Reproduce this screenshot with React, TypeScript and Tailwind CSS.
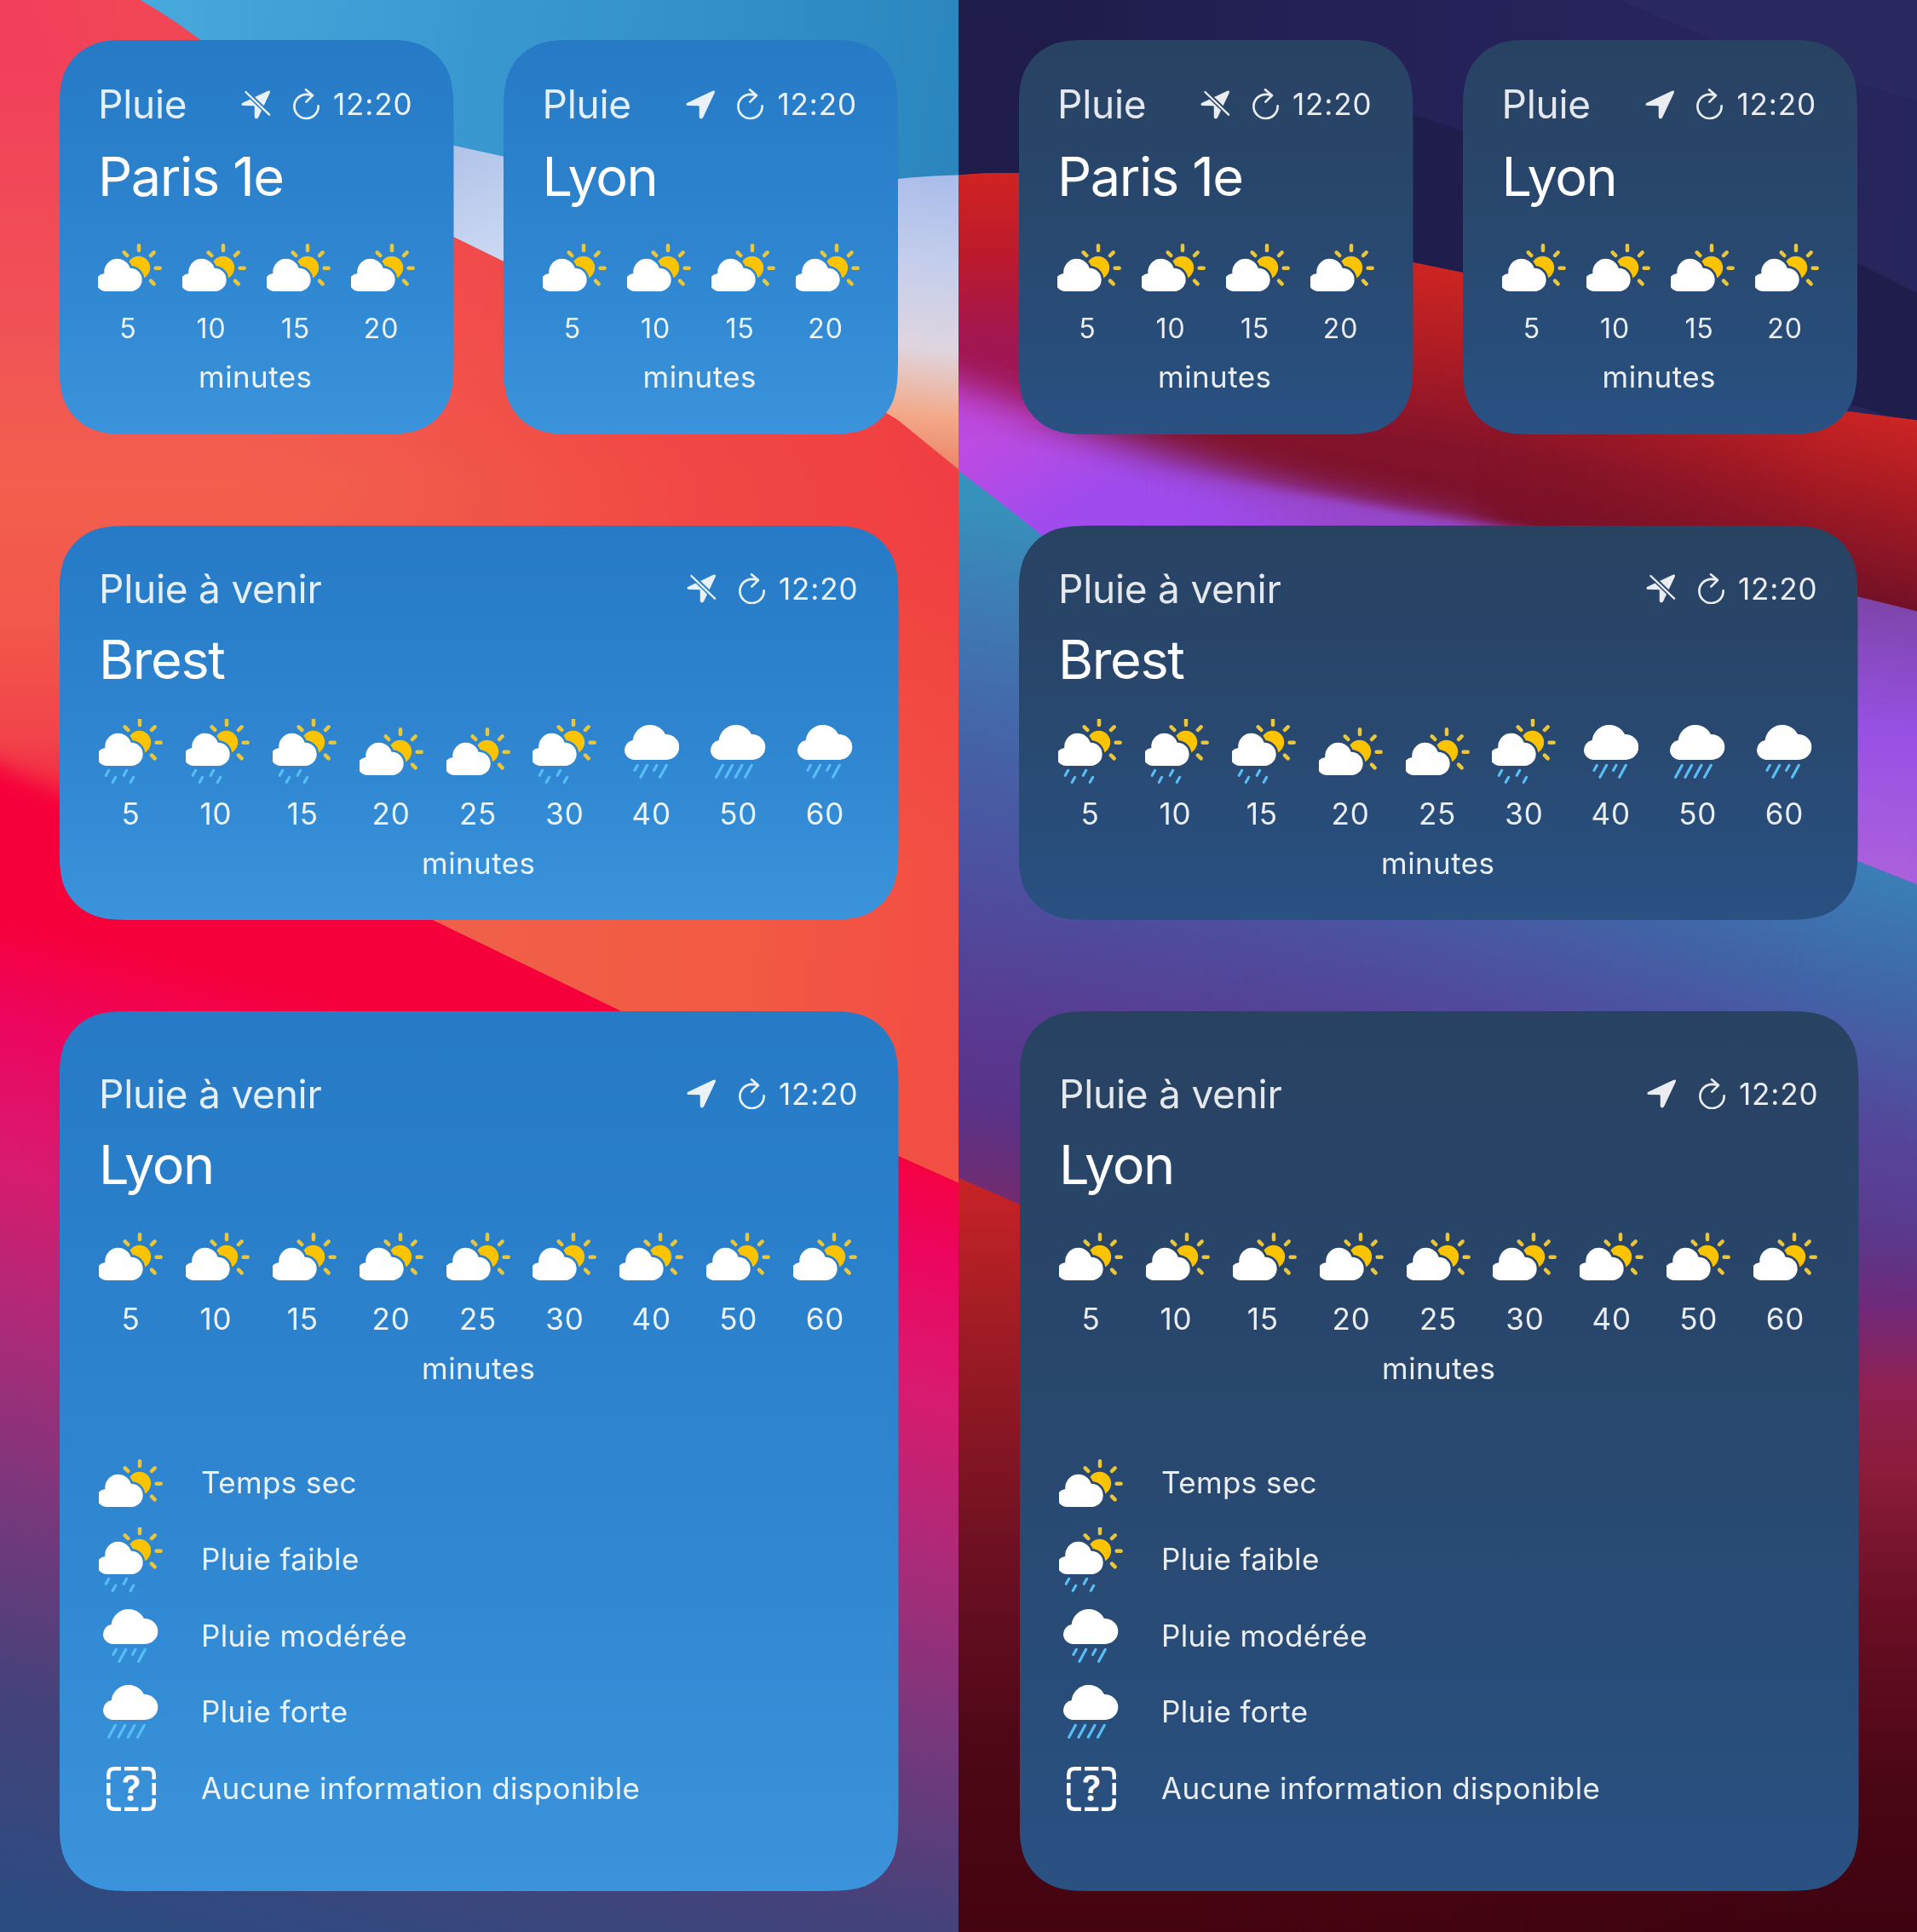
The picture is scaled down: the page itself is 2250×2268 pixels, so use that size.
import React, { useId } from "react";

type Theme = "light" | "dark";
type Weather = "dry" | "light" | "moderate" | "heavy" | "unknown";

/* ---------- Wallpapers ---------- */

function LightWallpaper() {
  return (
    <svg className="absolute inset-0 h-full w-full" viewBox="0 0 778 1568" preserveAspectRatio="none" aria-hidden="true">
      <defs>
        <linearGradient id="lw-base" gradientUnits="userSpaceOnUse" x1="0" y1="0" x2="-368.9" y2="1475.8">
          <stop offset="0.38" stopColor="#f6003a" />
          <stop offset="0.475" stopColor="#f6003c" />
          <stop offset="0.53" stopColor="#ec0660" />
          <stop offset="0.6" stopColor="#d91a6f" />
          <stop offset="0.69" stopColor="#a92b78" />
          <stop offset="0.79" stopColor="#71397c" />
          <stop offset="0.875" stopColor="#45427a" />
          <stop offset="0.98" stopColor="#2c4b80" />
        </linearGradient>
        <linearGradient id="lw-coral" gradientUnits="userSpaceOnUse" x1="0" y1="60" x2="0" y2="660">
          <stop offset="0" stopColor="#f2405a" />
          <stop offset="0.32" stopColor="#f15156" />
          <stop offset="0.55" stopColor="#f25f4d" />
          <stop offset="0.75" stopColor="#f2574b" />
          <stop offset="0.9" stopColor="#f2434a" />
          <stop offset="1" stopColor="#f41c40" />
        </linearGradient>
        <linearGradient id="lw-red" gradientUnits="userSpaceOnUse" x1="730" y1="300" x2="200" y2="490">
          <stop offset="0" stopColor="#f03f42" />
          <stop offset="0.35" stopColor="#f14344" stopOpacity="0.85" />
          <stop offset="0.7" stopColor="#f15046" stopOpacity="0.45" />
          <stop offset="1" stopColor="#f0604a" stopOpacity="0" />
        </linearGradient>
        <linearGradient id="lw-orange" gradientUnits="userSpaceOnUse" x1="350" y1="760" x2="778" y2="800">
          <stop offset="0" stopColor="#ef604a" />
          <stop offset="0.55" stopColor="#f35a43" />
          <stop offset="1" stopColor="#f24e44" />
        </linearGradient>
        <linearGradient id="lw-orange-fade" gradientUnits="userSpaceOnUse" x1="0" y1="440" x2="0" y2="700">
          <stop offset="0" stopColor="#fff" stopOpacity="0" />
          <stop offset="1" stopColor="#fff" />
        </linearGradient>
        <mask id="lw-orange-mask" maskUnits="userSpaceOnUse" x="0" y="0" width="778" height="1568">
          <rect width="778" height="1568" fill="url(#lw-orange-fade)" />
        </mask>
        <linearGradient id="lw-sky" gradientUnits="userSpaceOnUse" x1="130" y1="0" x2="778" y2="110">
          <stop offset="0" stopColor="#47a8dc" />
          <stop offset="0.4" stopColor="#3a98d0" />
          <stop offset="1" stopColor="#2b86be" />
        </linearGradient>
        <linearGradient id="lw-haze" gradientUnits="userSpaceOnUse" x1="778" y1="140" x2="750" y2="380">
          <stop offset="0" stopColor="#a8bcea" />
          <stop offset="0.3" stopColor="#c3cdec" />
          <stop offset="0.6" stopColor="#dfd5df" />
          <stop offset="0.82" stopColor="#f3aa8a" />
          <stop offset="1" stopColor="#ec8266" />
        </linearGradient>
        <linearGradient id="lw-haze-left" gradientUnits="userSpaceOnUse" x1="368" y1="120" x2="400" y2="210">
          <stop offset="0" stopColor="#b1c3e8" />
          <stop offset="1" stopColor="#cbd8f3" />
        </linearGradient>
        <filter id="lw-soft" x="-30%" y="-30%" width="160%" height="160%">
          <feGaussianBlur stdDeviation="9" />
        </filter>
      </defs>
      <rect width="778" height="1568" fill="url(#lw-base)" />
      <path d="M0 0H778V960L729 938L505 821L352 747L200 690L0 670Z" fill="url(#lw-coral)" />
      <path d="M-80 585L0 622L48 644L270 715V745L-80 745Z" fill="#f6003a" filter="url(#lw-soft)" />
      <path d="M0 0H778V800L352 640L120 560L0 560Z" fill="url(#lw-red)" />
      <path d="M100 380H778V960L729 938L505 821L352 747L100 620Z" fill="url(#lw-orange)" mask="url(#lw-orange-mask)" />
      <path d="M290 130L368 192L409 212Q600 262 729 341L778 381V0H290Z" fill="url(#lw-haze)" />
      <path d="M330 100L450 100V232L409 212L368 192Z" fill="url(#lw-haze-left)" />
      <path d="M114 0H778V142Q735 143 690 150Q540 155 409 127L368 118L300 130L162 32Q140 15 114 0Z" fill="url(#lw-sky)" />
    </svg>
  );
}

function DarkWallpaper() {
  return (
    <svg className="absolute inset-0 h-full w-full" viewBox="0 0 778 1568" preserveAspectRatio="none" aria-hidden="true">
      <defs>
        <linearGradient id="dw-night" gradientUnits="userSpaceOnUse" x1="0" y1="0" x2="778" y2="60">
          <stop offset="0" stopColor="#1d1b49" />
          <stop offset="0.4" stopColor="#242157" />
          <stop offset="1" stopColor="#27265c" />
        </linearGradient>
        <linearGradient id="dw-red" gradientUnits="userSpaceOnUse" x1="430" y1="218" x2="400" y2="425">
          <stop offset="0" stopColor="#d02522" />
          <stop offset="0.35" stopColor="#ad1c24" />
          <stop offset="0.7" stopColor="#84132a" />
          <stop offset="1" stopColor="#781128" />
        </linearGradient>
        <linearGradient id="dw-red-r" gradientUnits="userSpaceOnUse" x1="750" y1="335" x2="715" y2="490">
          <stop offset="0" stopColor="#cc2423" />
          <stop offset="0.4" stopColor="#a81b23" />
          <stop offset="1" stopColor="#6e1027" />
        </linearGradient>
        <linearGradient id="dw-fade-r" gradientUnits="userSpaceOnUse" x1="420" y1="0" x2="700" y2="0">
          <stop offset="0" stopColor="#000" />
          <stop offset="1" stopColor="#fff" />
        </linearGradient>
        <mask id="dw-fade-r-mask" maskUnits="userSpaceOnUse" x="0" y="0" width="778" height="1568">
          <rect width="778" height="1568" fill="url(#dw-fade-r)" />
        </mask>
        <linearGradient id="dw-red-l" gradientUnits="userSpaceOnUse" x1="0" y1="142" x2="0" y2="330">
          <stop offset="0" stopColor="#d02322" />
          <stop offset="0.35" stopColor="#bb1a2c" />
          <stop offset="0.7" stopColor="#a31650" />
          <stop offset="1" stopColor="#9c1658" />
        </linearGradient>
        <linearGradient id="dw-purple-l" gradientUnits="userSpaceOnUse" x1="0" y1="330" x2="60" y2="430">
          <stop offset="0" stopColor="#be4adf" />
          <stop offset="0.35" stopColor="#bb4be2" />
          <stop offset="1" stopColor="#9f4bee" />
        </linearGradient>
        <linearGradient id="dw-purple-tip" gradientUnits="userSpaceOnUse" x1="150" y1="0" x2="460" y2="0">
          <stop offset="0" stopColor="#9f4bee" stopOpacity="0" />
          <stop offset="0.5" stopColor="#9747cc" />
          <stop offset="1" stopColor="#8f45bc" />
        </linearGradient>
        <linearGradient id="dw-purple-r" gradientUnits="userSpaceOnUse" x1="750" y1="485" x2="730" y2="700">
          <stop offset="0" stopColor="#7c45a8" />
          <stop offset="0.5" stopColor="#9850e4" />
          <stop offset="1" stopColor="#aa5fdc" />
        </linearGradient>
        <linearGradient id="dw-blue" gradientUnits="userSpaceOnUse" x1="0" y1="400" x2="-90" y2="950">
          <stop offset="0" stopColor="#3692bb" />
          <stop offset="0.18" stopColor="#3f78b2" />
          <stop offset="0.38" stopColor="#4660a5" />
          <stop offset="0.58" stopColor="#4f4c9e" />
          <stop offset="0.74" stopColor="#583c92" />
          <stop offset="0.88" stopColor="#5a3288" />
          <stop offset="1" stopColor="#702c70" />
        </linearGradient>
        <linearGradient id="dw-blue-r" gradientUnits="userSpaceOnUse" x1="778" y1="700" x2="690" y2="1060">
          <stop offset="0" stopColor="#3a82b8" />
          <stop offset="0.3" stopColor="#4066a8" />
          <stop offset="0.6" stopColor="#55459a" />
          <stop offset="0.85" stopColor="#5c388b" />
          <stop offset="1" stopColor="#6a2a78" />
        </linearGradient>
        <linearGradient id="dw-side" x1="0" y1="0" x2="1" y2="0">
          <stop offset="0" stopColor="#000" />
          <stop offset="0.25" stopColor="#000" />
          <stop offset="0.92" stopColor="#fff" />
        </linearGradient>
        <mask id="dw-side-mask" maskUnits="userSpaceOnUse" x="0" y="0" width="778" height="1568">
          <rect width="778" height="1568" fill="url(#dw-side)" />
        </mask>
        <linearGradient id="dw-floor" gradientUnits="userSpaceOnUse" x1="0" y1="955" x2="0" y2="1568">
          <stop offset="0" stopColor="#c82326" />
          <stop offset="0.22" stopColor="#9c1b24" />
          <stop offset="0.5" stopColor="#6c1022" />
          <stop offset="0.75" stopColor="#4e0815" />
          <stop offset="1" stopColor="#440410" />
        </linearGradient>
        <linearGradient id="dw-floor-r" gradientUnits="userSpaceOnUse" x1="0" y1="985" x2="0" y2="1568">
          <stop offset="0" stopColor="#5c388a" stopOpacity="0" />
          <stop offset="0.13" stopColor="#70297a" />
          <stop offset="0.24" stopColor="#8f2052" />
          <stop offset="0.36" stopColor="#8b1c3a" />
          <stop offset="0.55" stopColor="#6a0e24" />
          <stop offset="0.8" stopColor="#4a0614" />
          <stop offset="1" stopColor="#3e0310" />
        </linearGradient>
        <filter id="dw-soft" x="-30%" y="-60%" width="160%" height="220%">
          <feGaussianBlur stdDeviation="15" />
        </filter>
        <filter id="dw-soft-sm" x="-30%" y="-60%" width="160%" height="220%">
          <feGaussianBlur stdDeviation="4" />
        </filter>
      </defs>
      <rect width="778" height="1568" fill="url(#dw-night)" />
      <path d="M0 0L99 35L400 120L500 260L0 160Z" fill="#1f1c4c" />
      <path d="M536 0L615 33L778 82V0Z" fill="#2a295f" />
      <path d="M360 90L729 213L778 238V345L360 215Z" fill="#1f1d4c" />
      <path d="M0 142Q25 140 49 140.5Q210 168 369 213L409 221Q560 300 722 334L778 341V500L400 480L0 480Z" fill="url(#dw-red)" />
      <path d="M409 221Q560 300 722 334L778 341V500H409Z" fill="url(#dw-red-r)" mask="url(#dw-fade-r-mask)" />
      <path d="M0 142Q25 140 49 140.5L110 152V345H0Z" fill="url(#dw-red-l)" />
      <path d="M-90 285L10 316L60 334Q180 376 300 404L420 430L446 480L-90 480Z" fill="url(#dw-purple-l)" filter="url(#dw-soft)" />
      <path d="M150 377Q330 413 462 430V480H150Z" fill="url(#dw-purple-tip)" filter="url(#dw-soft-sm)" />
      <path d="M446 430Q600 440 729 484L778 496V720H446Z" fill="url(#dw-purple-r)" />
      <path d="M0 382Q35 408 67 434L300 560L730 699L778 718V1100H0Z" fill="url(#dw-blue)" />
      <path d="M200 500L730 699L778 718V1100H200Z" fill="url(#dw-blue-r)" mask="url(#dw-side-mask)" />
      <path d="M0 956L49 977L130 1010V1568H0Z" fill="url(#dw-floor)" />
      <rect x="0" y="1100" width="778" height="468" fill="url(#dw-floor)" />
      <path d="M130 985H778V1568H130Z" fill="url(#dw-floor-r)" mask="url(#dw-side-mask)" />
    </svg>
  );
}

/* ---------- Weather icons (3 units per pixel) ---------- */

const SUN_CLOUD =
  "M0 116Q8 107 22 105A46.700 46.700 0 0 1 113 86A41 41 0 0 1 115 168H30Q10 168 0 154Z";

function SunCloud({ dy = 0 }: { dy?: number }) {
  const id = useId();
  return (
    <g transform={`translate(0 ${dy})`}>
      <mask id={id} maskUnits="userSpaceOnUse" x="-10" y="-10" width="260" height="260">
        <rect x="-10" y="-10" width="260" height="260" fill="#fff" />
        <path d={SUN_CLOUD} fill="#000" stroke="#000" strokeWidth="16" />
      </mask>
      <circle cx="143" cy="85" r="40.5" fill="#fcc400" mask={`url(#${id})`} />
      <path
        d="M144 7V24M203 86H218M92 31L103 42M197 31L186 42M186 131L197 142"
        stroke="#eac63a"
        strokeWidth="13.5"
        strokeLinecap="round"
      />
      <path d={SUN_CLOUD} fill="#fff" />
    </g>
  );
}

const RAIN_CLOUD =
  "M35 123A35 35 0 0 1 0 88A35 35 0 0 1 29 54A61 61 0 0 1 144 33A47 45 0 0 1 193 78A46 45 0 0 1 147 123Z";

function WeatherIcon({ kind }: { kind: Weather }) {
  switch (kind) {
    case "dry":
      return (
        <svg className="h-[56px] w-[75px]" viewBox="0 0 225 168" fill="none">
          <SunCloud />
        </svg>
      );
    case "light":
      return (
        <svg className="h-[76px] w-[75px]" viewBox="0 0 225 228" fill="none">
          <SunCloud dy={-3} />
          <path
            d="M35 181L25 199M59 205L49 223M98 181L88 199M122 205L112 223"
            stroke="#58bff6"
            strokeWidth="9.5"
            strokeLinecap="round"
          />
        </svg>
      );
    case "moderate":
    case "heavy":
      return (
        <svg className="h-[63px] w-[64.3px]" viewBox="0 0 193 189" fill="none">
          <path d={RAIN_CLOUD} fill="#fff" />
          <path
            d={
              kind === "moderate"
                ? "M46 142L36 160M80 142L57 184M114 142L104 160M148 142L125 184"
                : "M43 142L20 184M77 142L54 184M111 142L88 184M145 142L122 184"
            }
            stroke="#58bff6"
            strokeWidth="9.5"
            strokeLinecap="round"
          />
        </svg>
      );
    default:
      return (
        <svg className="h-[52px] w-[58px]" viewBox="0 0 174 156" fill="none">
          <path
            d="M7 44V28Q7 7 28 7H51M63 7H112M123 7H146Q167 7 167 28V44M7 57V100M167 57V100M7 112V128Q7 149 28 149H51M63 149H112M123 149H146Q167 149 167 128V112"
            stroke="#fff"
            strokeWidth="13.5"
          />
          <text
            x="87"
            y="121"
            textAnchor="middle"
            fill="#fff"
            stroke="#fff"
            strokeWidth="1"
            fontFamily="Inter, sans-serif"
            fontWeight="600"
            fontSize="121"
          >
            ?
          </text>
        </svg>
      );
  }
}

/* ---------- Status icons ---------- */

const ARROW =
  "M5 44L94 2Q104 -1 101 9L60 96Q57 101 51 100Q47 99 47 94V58Q47 55 44 55L6 54Q0 53 1 48Q1 46 5 44Z";

function LocationIcon({ off }: { off?: boolean }) {
  const id = useId();
  return (
    <svg className="h-[34px] w-[34.5px]" viewBox="0 0 103 102" fill="none">
      {off ? (
        <>
          <mask id={id} maskUnits="userSpaceOnUse" x="0" y="0" width="104" height="104">
            <rect width="104" height="104" fill="#fff" />
            <path d="M5 -6L112 98" stroke="#000" strokeWidth="17" />
          </mask>
          <path d={ARROW} fill="currentColor" mask={`url(#${id})`} />
          <path d="M16 6L99 86" stroke="currentColor" strokeWidth="7" strokeLinecap="round" />
        </>
      ) : (
        <path d={ARROW} fill="currentColor" />
      )}
    </svg>
  );
}

function RefreshIcon() {
  return (
    <svg className="h-[36.5px] w-[31px]" viewBox="0 0 93 110" fill="none">
      <path
        d="M89 61A42.500 42.500 0 1 1 46.500 20.500Q58 20.500 67 23M45 4L69 24L46 47"
        stroke="currentColor"
        strokeWidth="8"
        strokeLinecap="round"
        strokeLinejoin="round"
      />
    </svg>
  );
}

/* ---------- Widgets ---------- */

// Corner of a continuous-curvature rectangle, for a radius of 1, walked from
// the horizontal edge to the vertical one.
const CORNER: [number, number][] = [
  [1.528665, 0], [1.08849, 0], [0.868407, 0], [0.669934, 0.065496],
  [0.631494, 0.074911], [0.372824, 0.169059], [0.169059, 0.372824], [0.074911, 0.631494],
  [0, 0.868407], [0, 1.08849], [0, 1.528665],
];

function squircle(w: number, h: number, r: number) {
  const corner = (atRight: boolean, atBottom: boolean) => {
    const order = atRight === atBottom ? CORNER.map(([a, b]) => [b, a]) : CORNER;
    const p = order.map(([a, b]) => `${atRight ? w - a * r : a * r} ${atBottom ? h - b * r : b * r}`);
    return `${p[0]}C${p[1]} ${p[2]} ${p[3]}L${p[4]}C${p[5]} ${p[6]} ${p[7]}C${p[8]} ${p[9]} ${p[10]}`;
  };
  return `path("M${corner(true, false)}L${corner(true, true)}L${corner(false, true)}L${corner(false, false)}Z")`;
}

type Slot = { minute: number; kind: Weather };

function Header({ label, off }: { label: string; off?: boolean }) {
  return (
    <div className="flex h-[60px] items-center justify-between">
      <span className="mb-[1px] text-[46px] leading-[60px] tracking-[-0.25px] opacity-[.88]">{label}</span>
      <span className="flex items-center opacity-90">
        <LocationIcon off={off} />
        <span className="ml-[26px] flex">
          <RefreshIcon />
        </span>
        <span className="mb-[1px] ml-[15px] w-[95px] text-right text-[35px] leading-[60px] tracking-[0.9px]">12:20</span>
      </span>
    </div>
  );
}

function Card({
  theme,
  width,
  height,
  className,
  children,
}: {
  theme: Theme;
  width: number;
  height: number;
  className: string;
  children: React.ReactNode;
}) {
  const tone =
    theme === "light"
      ? "bg-[linear-gradient(to_bottom,#267ac6,#2e84cf_50%,#3a93db)]"
      : "bg-[linear-gradient(to_bottom,#284262,#28486f_50%,#295182)]";
  return (
    <section
      className={`flex shrink-0 flex-col text-white ${tone} ${className}`}
      style={{ width, height, clipPath: squircle(width, height, 66) }}
    >
      {children}
    </section>
  );
}

const slots = (kinds: Weather[]): Slot[] =>
  kinds.map((kind, i) => ({ kind, minute: [5, 10, 15, 20, 25, 30, 40, 50, 60][i] }));

const startsWithOne = (minute: number) => minute === 10 || minute === 15;

function SmallWidget({ theme, city, off }: { theme: Theme; city: string; off?: boolean }) {
  return (
    <Card theme={theme} width={463} height={463.5} className="pt-[46px] pl-[45.500px] pr-[48px]">
      <Header label="Pluie" off={off} />
      <h2 className="mt-[16px] text-[63px] leading-[76px] tracking-[-1.4px]">{city}</h2>
      <div className="mt-[31px] flex w-[372px] justify-between">
        {slots(["dry", "dry", "dry", "dry"]).map((s) => (
          <div key={s.minute} className="flex w-[75px] flex-col items-center">
            <div className="flex h-[76px] items-center">
              <WeatherIcon kind={s.kind} />
            </div>
            <span
              className={`mt-[12px] text-[32px] leading-[44px] tracking-[0.8px] opacity-90 ${
                startsWithOne(s.minute) ? "mr-[7px]" : "mr-[4px]"
              }`}
            >
              {s.minute}
            </span>
          </div>
        ))}
      </div>
      <p className="mt-[12px] text-center text-[35px] leading-[44px] tracking-[0.4px] opacity-90">minutes</p>
    </Card>
  );
}

function Forecast({ items }: { items: Slot[] }) {
  return (
    <>
      <div className="flex w-[890px] justify-between">
        {items.map((s) => (
          <div key={s.minute} className="flex w-[75px] flex-col items-center">
            <div className="flex h-[76px] items-center">
              <WeatherIcon kind={s.kind} />
            </div>
            <span
              className={`mt-[13px] text-[35px] leading-[44px] tracking-[0.8px] opacity-90 ${
                startsWithOne(s.minute) ? "mr-[4px]" : ""
              }`}
            >
              {s.minute}
            </span>
          </div>
        ))}
      </div>
      <p className="mt-[14px] text-center text-[35px] leading-[44px] tracking-[0.4px] opacity-90">minutes</p>
    </>
  );
}

const LEGEND: { kind: Weather; label: string }[] = [
  { kind: "dry", label: "Temps sec" },
  { kind: "light", label: "Pluie faible" },
  { kind: "moderate", label: "Pluie modérée" },
  { kind: "heavy", label: "Pluie forte" },
  { kind: "unknown", label: "Aucune information disponible" },
];

function Screen({ theme }: { theme: Theme }) {
  const dark = theme === "dark";
  return (
    <div className="relative h-[2268px] w-[1125px] overflow-hidden">
      {dark ? <DarkWallpaper /> : <LightWallpaper />}
      <div className={`relative flex flex-col pt-[46.500px] ${dark ? "pl-[70.500px]" : "pl-[69.500px]"}`}>
        <div className="flex gap-[58.500px]">
          <SmallWidget theme={theme} city="Paris 1e" off />
          <SmallWidget theme={theme} city="Lyon" />
        </div>
        <Card theme={theme} width={985} height={463} className="mt-[107px] pt-[44px] pl-[46.500px] pr-[47px]">
          <Header label="Pluie à venir" off />
          <h2 className="mt-[15px] mb-[32px] text-[63px] leading-[76px] tracking-[-1.4px]">Brest</h2>
          <Forecast
            items={slots(["light", "light", "light", "dry", "dry", "light", "moderate", "heavy", "moderate"])}
          />
        </Card>
        <Card
          theme={theme}
          width={985}
          height={1033}
          className={`mt-[107px] pt-[67px] pl-[46.500px] pr-[47px] ${dark ? "ml-[1px]" : ""}`}
        >
          <Header label="Pluie à venir" />
          <h2 className="mt-[15px] mb-[32px] text-[63px] leading-[76px] tracking-[-1.4px]">Lyon</h2>
          <Forecast items={slots(["dry", "dry", "dry", "dry", "dry", "dry", "dry", "dry", "dry"])} />
          <ul className="mt-[68px]">
            {LEGEND.map((row) => (
              <li key={row.kind} className="flex h-[89.700px] items-center gap-[45px]">
                <span className="flex w-[75px] justify-center">
                  <WeatherIcon kind={row.kind} />
                </span>
                <span className="mb-[1px] text-[35px] leading-[44px] tracking-[0.38px] opacity-90">{row.label}</span>
              </li>
            ))}
          </ul>
        </Card>
      </div>
    </div>
  );
}

export default function App() {
  return (
    <main className="flex h-[2268px] w-[2250px] overflow-hidden font-['Inter',sans-serif] antialiased">
      <Screen theme="light" />
      <Screen theme="dark" />
    </main>
  );
}
